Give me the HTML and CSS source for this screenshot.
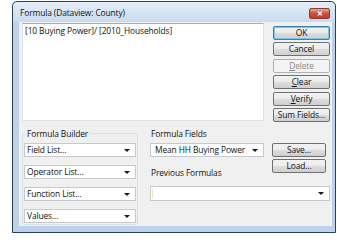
FILE: index.html
```html
<!DOCTYPE html>
<html lang="en">
<head>
    <meta charset="UTF-8">
    <title>Formula (Dataview: County)</title>
    <link rel="stylesheet" href="styles.css">
</head>
<body>
    <div class="window">
        <div class="titlebar">
            <span class="title">Formula (Dataview: County)</span>
            <span class="close">&#x2715;</span>
        </div>
        <div class="client">
            <div class="top-row">
                <div class="formula-box">[10 Buying Power]/ [2010_Households]</div>
                <div class="button-col">
                    <div class="btn default">OK</div>
                    <div class="btn">Cancel</div>
                    <div class="btn disabled"><u>D</u>elete</div>
                    <div class="btn"><u>C</u>lear</div>
                    <div class="btn"><u>V</u>erify</div>
                    <div class="btn">Sum Fields...</div>
                </div>
            </div>
            <div class="bottom-row">
                <fieldset class="builder">
                    <legend>Formula Builder</legend>
                    <div class="combo">Field List...</div>
                    <div class="combo">Operator List...</div>
                    <div class="combo">Function List...</div>
                    <div class="combo">Values...</div>
                </fieldset>
                <div class="fields">
                    <div class="fields-row">
                        <div class="fields-left">
                            <div class="label">Formula Fields</div>
                            <div class="combo fields-combo">Mean HH Buying Power</div>
                            <div class="label prev-label">Previous Formulas</div>
                        </div>
                        <div class="fields-right">
                            <div class="btn small">Save...</div>
                            <div class="btn small">Load...</div>
                        </div>
                    </div>
                    <div class="combo prev-combo"><span class="caret"></span></div>
                </div>
            </div>
        </div>
    </div>
</body>
</html>
```

FILE: styles.css
```css
body {
    margin: 0;
    background-color: #fff;
    font-family: "Open Sans", "Noto Sans", sans-serif;
    font-size: 8.4px;
    letter-spacing: -0.1px;
    color: #111;
}
.window {
    margin: 1px 0 0 12px;
    width: 322px;
    height: 230px;
    border: 1px solid #2a4456;
    border-radius: 5px 5px 0 0;
    background-color: #bcd2eb;
    display: flex;
    flex-direction: column;
}
.titlebar {
    height: 20px;
    display: flex;
    justify-content: space-between;
    align-items: flex-start;
    padding: 0 5px 0 7px;
    background: linear-gradient(#e4eef9, #c9dbef);
    border-radius: 5px 5px 0 0;
}
.title {
    line-height: 21px;
    color: #111;
}
.close {
    margin-top: 6px;
    width: 21px;
    height: 11px;
    box-sizing: border-box;
    border: 1px solid #8a3b33;
    border-radius: 2px;
    background: linear-gradient(#e1a99f, #c7523f 50%, #c43a25);
    color: #fff;
    font-size: 7px;
    font-weight: bold;
    line-height: 9px;
    text-align: center;
}
.client {
    flex: 1;
    margin: 0 3px 6px 6px;
    padding: 1px 2px 0 3px;
    background-color: #f0f0f0;
    display: flex;
    flex-direction: column;
}
.top-row {
    display: flex;
    gap: 9px;
}
.formula-box {
    width: 239px;
    height: 96px;
    border: 1px solid #dfe2e8;
    border-top-color: #abadb3;
    background-color: #fff;
    padding: 0 2px;
    line-height: 14px;
}
.button-col {
    padding-top: 3px;
    display: flex;
    flex-direction: column;
    gap: 2.4px;
}
.btn {
    width: 57px;
    height: 14px;
    box-sizing: border-box;
    border: 1px solid #707070;
    border-radius: 2px;
    background: linear-gradient(#f2f2f2, #ebebeb 50%, #dddddd 51%, #cfcfcf);
    text-align: center;
    line-height: 12px;
    color: #111;
}
.btn.default {
    border-color: #3c7fb1;
    box-shadow: inset 0 0 0 1px #7ac6ea;
}
.btn.disabled {
    border-color: #adb2b5;
    background: #f4f4f4;
    color: #8a8a8a;
}
.btn.small {
    width: 54px;
}
.bottom-row {
    display: flex;
    margin-top: 6px;
}
.builder {
    margin: 0;
    width: 117px;
    height: 97px;
    box-sizing: border-box;
    padding: 0 1px;
    border: 1px solid #d5dfe5;
    border-radius: 3px;
    display: flex;
    flex-direction: column;
    gap: 8px;
}
.builder legend {
    padding: 0 2px;
    margin-left: 1px;
    line-height: 12px;
}
.builder .combo:first-of-type {
    margin-top: 3px;
}
.combo {
    position: relative;
    height: 14px;
    box-sizing: border-box;
    border: 1px solid #c5c9d0;
    background-color: #fff;
    padding-left: 2px;
    line-height: 12px;
}
.combo::after {
    content: "";
    position: absolute;
    right: 5px;
    top: 5px;
    border-left: 3px solid transparent;
    border-right: 3px solid transparent;
    border-top: 3px solid #1a1a1a;
}
.fields {
    margin-left: 12px;
    display: flex;
    flex-direction: column;
}
.fields-row {
    display: flex;
    gap: 8px;
}
.fields-left {
    display: flex;
    flex-direction: column;
}
.label {
    line-height: 12px;
    padding-left: 1px;
}
.fields-combo {
    width: 114px;
    margin-top: 3px;
    padding-left: 4px;
}
.prev-label {
    margin-top: 10px;
}
.fields-right {
    padding-top: 15px;
    display: flex;
    flex-direction: column;
    gap: 2px;
}
.prev-combo {
    width: 180px;
    height: 15px;
    margin-top: 7px;
}
.prev-combo .caret {
    position: absolute;
    left: 1px;
    top: 2px;
    height: 9px;
    border-left: 1px solid #f3e6a0;
}
```
